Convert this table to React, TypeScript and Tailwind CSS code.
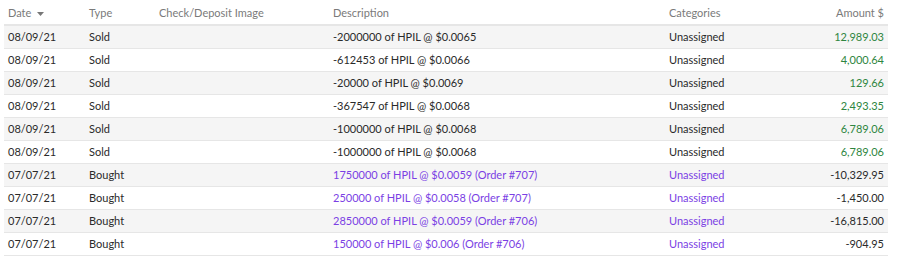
const rows = [
  { date: '08/09/21', type: 'Sold', desc: '-2000000 of HPIL @ $0.0065', amount: '12,989.03' },
  { date: '08/09/21', type: 'Sold', desc: '-612453 of HPIL @ $0.0066', amount: '4,000.64' },
  { date: '08/09/21', type: 'Sold', desc: '-20000 of HPIL @ $0.0069', amount: '129.66' },
  { date: '08/09/21', type: 'Sold', desc: '-367547 of HPIL @ $0.0068', amount: '2,493.35' },
  { date: '08/09/21', type: 'Sold', desc: '-1000000 of HPIL @ $0.0068', amount: '6,789.06' },
  { date: '08/09/21', type: 'Sold', desc: '-1000000 of HPIL @ $0.0068', amount: '6,789.06' },
  { date: '07/07/21', type: 'Bought', desc: '1750000 of HPIL @ $0.0059 (Order #707)', amount: '-10,329.95' },
  { date: '07/07/21', type: 'Bought', desc: '250000 of HPIL @ $0.0058 (Order #707)', amount: '-1,450.00' },
  { date: '07/07/21', type: 'Bought', desc: '2850000 of HPIL @ $0.0059 (Order #706)', amount: '-16,815.00' },
  { date: '07/07/21', type: 'Bought', desc: '150000 of HPIL @ $0.006 (Order #706)', amount: '-904.95' },
];

export default function App() {
  return (
    <div className="w-[897px] h-[263px] bg-white pl-1 pr-[9px] text-[11px] text-[#2a2a2a]" style={{ fontFamily: 'Lato, sans-serif' }}>
      <div className="flex h-[26px] items-center pt-[3px] border-b-2 border-[#e6e6e6] text-[#7a7a7a]">
        <div className="w-[85px] pl-1 flex items-center gap-[6px]">
          Date
          <svg width="7" height="4" viewBox="0 0 7 4"><path d="M0 0h7L3.5 4z" fill="#777" /></svg>
        </div>
        <div className="w-[70px]">Type</div>
        <div className="w-[174px]">Check/Deposit Image</div>
        <div className="w-[336px]">Description</div>
        <div className="flex-1">Categories</div>
        <div className="pr-1">Amount $</div>
      </div>
      {rows.map((r, i) => {
        const bought = r.type === 'Bought';
        return (
          <div key={i} className={`flex h-[23px] items-center pt-px border-b border-[#e6e6e6] ${i % 2 === 0 ? 'bg-[#f5f5f5]' : 'bg-white'}`}>
            <div className="w-[85px] pl-1">{r.date}</div>
            <div className="w-[70px]">{r.type}</div>
            <div className="w-[174px]"></div>
            <div className={`w-[336px] ${bought ? 'text-[#7b3fe4]' : ''}`}>{r.desc}</div>
            <div className={`flex-1 ${bought ? 'text-[#7b3fe4]' : ''}`}>Unassigned</div>
            <div className={`pr-1 ${bought ? 'text-[#2a2a2a]' : 'text-[#2e8540]'}`}>{r.amount}</div>
          </div>
        );
      })}
    </div>
  );
}
